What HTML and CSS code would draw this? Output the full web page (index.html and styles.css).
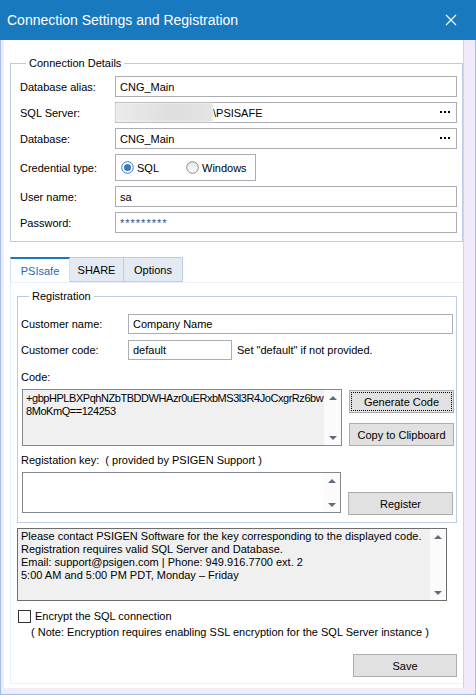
FILE: index.html
```html
<!DOCTYPE html>
<html lang="en">
<head>
  <meta charset="UTF-8" />
  <title>Connection Settings and Registration</title>
  <link rel="stylesheet" href="styles.css">
</head>
<body>
  <div class="window">
    <div class="titlebar">
      <span class="title">Connection Settings and Registration</span>
      <svg class="close" width="12" height="12" viewBox="0 0 12 12"><path d="M1 1L11 11M11 1L1 11" stroke="#fff" stroke-width="1.1"/></svg>
    </div>

    <div class="content">
      <fieldset class="group conn">
        <legend>Connection Details</legend>

        <div class="row">
          <label>Database alias:</label>
          <div class="field">CNG_Main</div>
        </div>
        <div class="row">
          <label>SQL Server:</label>
          <div class="field">
            <span class="blurred"></span><span class="value">\PSISAFE</span>
            <svg class="dots" width="10" height="3" viewBox="0 0 10 3"><rect x="0" y="0" width="2" height="2" fill="#000"/><rect x="4" y="0" width="2" height="2" fill="#000"/><rect x="8" y="0" width="2" height="2" fill="#000"/></svg>
          </div>
        </div>
        <div class="row">
          <label>Database:</label>
          <div class="field">
            <span class="value">CNG_Main</span>
            <svg class="dots" width="10" height="3" viewBox="0 0 10 3"><rect x="0" y="0" width="2" height="2" fill="#000"/><rect x="4" y="0" width="2" height="2" fill="#000"/><rect x="8" y="0" width="2" height="2" fill="#000"/></svg>
          </div>
        </div>
        <div class="row radio-row">
          <label>Credential type:</label>
          <div class="radio-box">
            <span class="radio first">
              <svg width="13" height="13" viewBox="0 0 13 13"><circle cx="6.5" cy="6.5" r="5.8" fill="#fff" stroke="#3b7ab5" stroke-width="1"/><circle cx="6.5" cy="6.5" r="3.5" fill="#3b7ab5"/></svg>
              SQL
            </span>
            <span class="radio">
              <svg width="13" height="13" viewBox="0 0 13 13"><defs><linearGradient id="rg" x1="0" y1="0" x2="0" y2="1"><stop offset="0" stop-color="#e4e4e4"/><stop offset="1" stop-color="#ffffff"/></linearGradient></defs><circle cx="6.5" cy="6.5" r="5.8" fill="url(#rg)" stroke="#8a8a8a" stroke-width="1"/></svg>
              Windows
            </span>
          </div>
        </div>
        <div class="row">
          <label>User name:</label>
          <div class="field">sa</div>
        </div>
        <div class="row">
          <label>Password:</label>
          <div class="field password">*********</div>
        </div>
      </fieldset>

      <div class="tabs">
        <div class="tab active">PSIsafe</div>
        <div class="tab">SHARE</div>
        <div class="tab">Options</div>
      </div>

      <div class="tab-panel">
        <fieldset class="group reg">
          <legend>Registration</legend>

          <div class="row reg-row">
            <label>Customer name:</label>
            <div class="field name">Company Name</div>
          </div>
          <div class="row reg-row">
            <label>Customer code:</label>
            <div class="field code-field">default</div>
            <span class="hint">Set "default" if not provided.</span>
          </div>

          <div class="caption">Code:</div>
          <div class="pair">
            <div class="textbox code-box">
              <div class="text">+gbpHPLBXPqhNZbTBDDWHAzr0uERxbMS3l3R4JoCxgrRz6bw<br>8MoKmQ==124253</div>
              <div class="scroll"><span class="up"></span><span class="down"></span></div>
            </div>
            <div class="buttons">
              <button class="btn focused">Generate Code</button>
              <button class="btn">Copy to Clipboard</button>
            </div>
          </div>

          <div class="caption second">Registation key:&nbsp; ( provided by PSIGEN Support )</div>
          <div class="pair">
            <div class="textbox key-box">
              <div class="text"></div>
              <div class="scroll"><span class="up"></span><span class="down"></span></div>
            </div>
            <div class="buttons end">
              <button class="btn">Register</button>
            </div>
          </div>
        </fieldset>

        <div class="textbox info-box">
          <div class="text">Please contact PSIGEN Software for the key corresponding to the displayed code.<br>Registration requires valid SQL Server and Database.<br>Email: support@psigen.com | Phone: 949.916.7700 ext. 2<br>5:00 AM and 5:00 PM PDT, Monday – Friday</div>
          <div class="scroll"><span class="up"></span><span class="down"></span></div>
        </div>

        <div class="check-row">
          <span class="checkbox"></span>
          <span>Encrypt the SQL connection</span>
        </div>
        <div class="note">( Note: Encryption requires enabling SSL encryption for the SQL Server instance )</div>

        <div class="footer">
          <button class="btn save">Save</button>
        </div>
      </div>
    </div>
  </div>
</body>
</html>
```

FILE: styles.css
```css
body {
  margin: 0;
  font-family: "Liberation Sans", Arial, sans-serif;
  font-size: 11px;
  color: #000;
}
.window {
  width: 476px;
  height: 695px;
  box-sizing: border-box;
  border: 1px solid #a3bde6;
  border-top: none;
  background: #efebfb;
  display: flex;
  flex-direction: column;
}
.titlebar {
  height: 40px;
  background: #1979bf;
  color: #fff;
  display: flex;
  align-items: center;
  justify-content: space-between;
  padding: 0 19px 0 7px;
  margin: 0 -1px;
  flex-shrink: 0;
}
.title {
  font-size: 14px;
  padding-bottom: 1px;
}
.content {
  flex: 1;
  background: #fff;
  margin: 0 11px 6px 3px;
  border-right: 1px solid #c9d5ee;
  padding: 0 0 0 6px;
  display: flex;
  flex-direction: column;
}
.group {
  border: 1px solid #bccde3;
  margin: 0;
  min-width: 0;
}
.group legend {
  padding: 0 3px;
  line-height: 14px;
}
.conn {
  margin-top: 16px;
  padding: 6px 5px 8px 9px;
}
.conn legend {
  margin-left: 6px;
}
.row {
  display: flex;
  align-items: center;
  height: 21px;
  margin-bottom: 5px;
}
.row:last-child {
  margin-bottom: 0;
}
.row label {
  width: 95px;
  flex-shrink: 0;
}
.field {
  flex: 1;
  height: 21px;
  box-sizing: border-box;
  border: 1px solid #abadb3;
  display: flex;
  align-items: center;
  padding: 0 6px 0 4px;
  background: #fff;
}
.field .value {
  flex: 1;
}
.blurred {
  width: 98px;
  height: 19px;
  margin-left: -5px;
  background: linear-gradient(90deg, #ebebeb 0%, #dedede 60%, #e4e4e4 100%);
  filter: blur(1px);
}
.dots {
  flex-shrink: 0;
}
.password {
  color: #2b4f8c;
  letter-spacing: 1px;
}
.radio-row {
  height: 27px;
}
.radio-box {
  width: 141px;
  height: 27px;
  box-sizing: border-box;
  border: 1px solid #abadb3;
  display: flex;
  align-items: center;
  padding-left: 5px;
}
.radio {
  display: flex;
  align-items: center;
  gap: 3px;
}
.radio.first {
  width: 65px;
}
.radio svg {
  display: block;
}
.tabs {
  display: flex;
  margin-top: 15px;
  height: 25px;
}
.tab {
  box-sizing: border-box;
  height: 25px;
  display: flex;
  align-items: center;
  justify-content: center;
  background: #e4eaf4;
  border: 1px solid #bccde4;
  border-left: none;
}
.tab.active {
  background: #fff;
  color: #1c6bb4;
  border: 1px solid #d5e0ef;
  border-top: 2px solid #1979bf;
  border-bottom: none;
  width: 60px;
}
.tab:nth-child(2) {
  width: 54px;
}
.tab:nth-child(3) {
  width: 59px;
}
.tab-panel {
  flex: 1;
  border: 1px solid #eaf0f8;
  border-right: none;
  padding: 6px 6px 0 6px;
  margin-bottom: 4px;
  display: flex;
  flex-direction: column;
}
.reg {
  padding: 11px 3px 7px 3px;
}
.reg legend {
  margin-left: 8px;
}
.reg-row {
  height: 20px;
  margin-bottom: 6px;
}
.reg-row label {
  width: 107px;
}
.reg-row .field {
  height: 20px;
}
.code-field {
  flex: none;
  width: 104px;
}
.hint {
  margin-left: 5px;
}
.caption {
  line-height: 14px;
  margin: 10px 0 5px;
}
.caption.second {
  margin-top: 7px;
}
.pair {
  display: flex;
  gap: 7px;
  padding-left: 1px;
}
.textbox {
  display: flex;
  box-sizing: border-box;
  border: 1px solid #828790;
}
.textbox .text {
  flex: 1;
  padding: 2px 3px;
  line-height: 13px;
  white-space: nowrap;
  overflow: hidden;
}
.code-box {
  width: 320px;
  height: 57px;
  background: #f0f0f0;
}
.code-box .text {
  letter-spacing: -0.45px;
}
.key-box {
  width: 320px;
  height: 41px;
  background: #fff;
}
.scroll {
  width: 17px;
  background: #fbfbfb;
  display: flex;
  flex-direction: column;
  justify-content: space-between;
  align-items: center;
  padding: 6px 0 5px;
}
.up, .down {
  width: 0;
  height: 0;
  border-left: 4px solid transparent;
  border-right: 4px solid transparent;
}
.up {
  border-bottom: 4px solid #5f6c80;
}
.down {
  border-top: 4px solid #5f6c80;
}
.buttons {
  display: flex;
  flex-direction: column;
  gap: 10px;
  padding-top: 1px;
}
.buttons.end {
  padding-top: 20px;
}
.btn {
  width: 105px;
  height: 23px;
  box-sizing: border-box;
  background: #e1e1e1;
  border: 1px solid #adadad;
  font: inherit;
  color: #000;
  padding: 0;
}
.btn.focused {
  outline: 1px dotted #000;
  outline-offset: -3px;
}
.info-box {
  margin-top: 5px;
  width: 430px;
  height: 73px;
  background: #f0f0f0;
  border-color: #6e6e6e;
}
.info-box .text {
  padding: 1px 3px;
}
.info-box .scroll {
  width: 16px;
}
.check-row {
  display: flex;
  align-items: center;
  gap: 4px;
  margin-top: 8px;
  padding-left: 1px;
  line-height: 14px;
}
.checkbox {
  width: 13px;
  height: 13px;
  box-sizing: border-box;
  border: 1px solid #333;
  background: #fff;
}
.note {
  margin-top: 2px;
  padding-left: 14px;
  line-height: 14px;
}
.footer {
  display: flex;
  justify-content: flex-end;
  margin-top: 15px;
}
.save {
  width: 104px;
}
```
